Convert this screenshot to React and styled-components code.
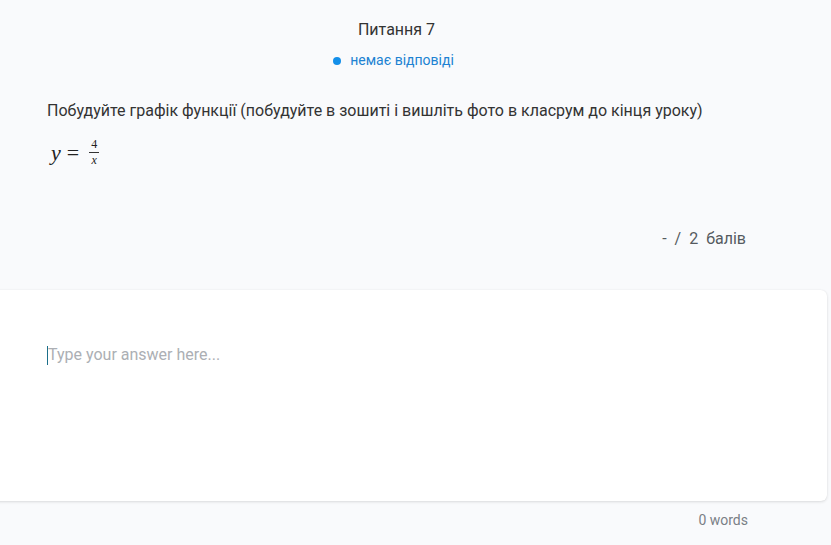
import React, { useState } from 'react';
import styled, { createGlobalStyle } from 'styled-components';

const GlobalStyle = createGlobalStyle`
  html, body {
    margin: 0;
    padding: 0;
    background: #f9fafc;
    font-family: Roboto, "Noto Sans", Arial, sans-serif;
    overflow: hidden;
  }
`;

const Page = styled.div`
  width: 831px;
  height: 545px;
  background: #f9fafc;
  box-sizing: border-box;
`;

const Header = styled.div`
  width: 793px;
  display: flex;
  flex-direction: column;
  align-items: center;
  padding-top: 20px;
`;

const Title = styled.div`
  font-size: 16px;
  color: #333;
  line-height: 20px;
`;

const Status = styled.div`
  display: flex;
  align-items: center;
  gap: 9px;
  margin-top: 12px;
  font-size: 14px;
  line-height: 17px;
  color: #2082d2;
  margin-left: -6px;
`;

const Dot = styled.span`
  width: 8px;
  height: 8px;
  border-radius: 50%;
  background: #148fe9;
`;

const Question = styled.div`
  padding: 32px 0 0 47px;
  font-size: 16px;
  line-height: 20px;
  color: #333;
`;

const Formula = styled.div`
  display: flex;
  align-items: center;
  margin: 17px 0 0 4px;
  font-family: "Liberation Serif", "DejaVu Serif", serif;
  font-size: 22px;
  color: #222;
  height: 30px;
`;

const Var = styled.span`
  font-style: italic;
`;

const Eq = styled.span`
  margin: 0 10px 0 6px;
`;

const Fraction = styled.span`
  display: inline-flex;
  flex-direction: column;
  align-items: center;
  font-size: 12px;
  line-height: 11px;
  margin-top: -2px;
`;

const FracNum = styled.span`
  padding: 0 2px 2px;
`;

const FracDen = styled.span`
  border-top: 1px solid #333;
  padding-top: 2px;
  align-self: stretch;
  text-align: center;
`;

const Score = styled.div`
  display: flex;
  justify-content: flex-end;
  gap: 8px;
  padding-right: 85px;
  margin-top: 61px;
  font-size: 16px;
  line-height: 20px;
  color: #555a60;
`;

const Card = styled.div`
  margin: 41px 4px 0 -36px;
  height: 211px;
  background: #fff;
  border-radius: 6px;
  box-shadow: 0 1px 3px rgba(0, 0, 0, 0.12), 0 0 1px rgba(0, 0, 0, 0.08);
  box-sizing: border-box;
  padding: 55px 0 0 83px;
`;

const AnswerRow = styled.div`
  display: flex;
  align-items: flex-start;
`;

const Answer = styled.textarea`
  width: 600px;
  height: 40px;
  border: none;
  outline: none;
  resize: none;
  padding: 0;
  font-family: Roboto, "Noto Sans", Arial, sans-serif;
  font-size: 16px;
  line-height: 20px;
  color: #333;
  caret-color: #0a6b8c;
  background: transparent;

  &::placeholder {
    color: #acafb4;
  }
`;

const Caret = styled.span`
  display: block;
  width: 1px;
  height: 19px;
  margin-top: 1px;
  background: #1b6f8a;
`;

const WordCount = styled.div`
  display: flex;
  justify-content: flex-end;
  padding: 10px 83px 0 0;
  font-size: 14px;
  line-height: 18px;
  color: #7a7f86;
`;

function App() {
  const [text, setText] = useState('');
  const words = text.trim() ? text.trim().split(/\s+/).length : 0;

  return (
    <Page>
      <GlobalStyle />
      <Header>
        <Title>Питання 7</Title>
        <Status>
          <Dot />
          немає відповіді
        </Status>
      </Header>
      <Question>
        Побудуйте графік функції (побудуйте в зошиті і вишліть фото в класрум до кінця уроку)
        <Formula>
          <Var>y</Var>
          <Eq>=</Eq>
          <Fraction>
            <FracNum>4</FracNum>
            <FracDen>
              <Var>x</Var>
            </FracDen>
          </Fraction>
        </Formula>
      </Question>
      <Score>
        <span>-</span>
        <span>/</span>
        <span>2</span>
        <span>балів</span>
      </Score>
      <Card>
        <AnswerRow>
          {!text && <Caret />}
          <Answer
            placeholder="Type your answer here..."
            value={text}
            onChange={(e) => setText(e.target.value)}
          />
        </AnswerRow>
      </Card>
      <WordCount>{words} words</WordCount>
    </Page>
  );
}

export default App;
